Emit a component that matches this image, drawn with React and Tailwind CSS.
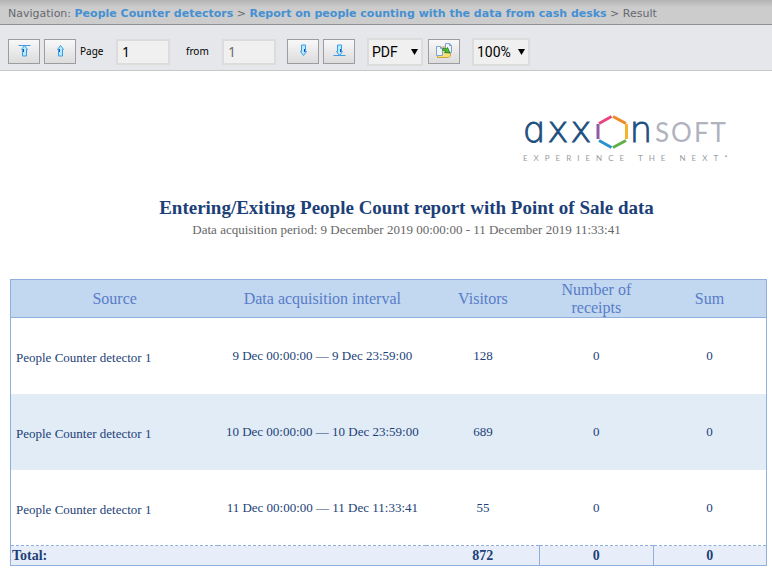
import { useState } from 'react'

const ROWS = [
  { id: 1, source: 'People Counter detector 1', interval: '9 Dec 00:00:00 — 9 Dec 23:59:00', visitors: 128, receipts: 0, sum: 0 },
  { id: 2, source: 'People Counter detector 1', interval: '10 Dec 00:00:00 — 10 Dec 23:59:00', visitors: 689, receipts: 0, sum: 0 },
  { id: 3, source: 'People Counter detector 1', interval: '11 Dec 00:00:00 — 11 Dec 11:33:41', visitors: 55, receipts: 0, sum: 0 },
]

function Breadcrumbs() {
  return (
    <nav
      aria-label="Navigation"
      className="flex h-[25px] items-center whitespace-pre border-b border-[#8f8f8f] bg-linear-to-b from-[#b4b4b4] to-[#cccccc] to-30% px-2 pt-1 font-['DejaVu_Sans',sans-serif] text-[11px] text-[#666870]"
    >
      <span>Navigation: </span>
      <a href="#detectors" className="font-bold text-[#4590d2]">People Counter detectors</a>
      <span> &gt; </span>
      <a href="#report" className="font-bold text-[#4590d2]">Report on people counting with the data from cash desks</a>
      <span> &gt; Result</span>
    </nav>
  )
}

function ToolButton({ label, children }) {
  return (
    <button
      type="button"
      aria-label={label}
      className="flex h-[25px] w-8 shrink-0 items-center justify-center border border-[#9b9da1] bg-linear-to-b from-[#f8f8f8] to-[#dcdcdc] pb-[2px]"
    >
      {children}
    </button>
  )
}

// Outlined page arrow, optionally with a bar at its tip (first / last page)
function ArrowIcon({ down = false, bar = false }) {
  return (
    <svg width="13" height="13" viewBox="0 0 13 13" fill="none" stroke="#3d9be6" className={down ? 'rotate-180' : ''}>
      {bar && <path d="M.5 1.5h12" />}
      <path d="M6.500 1.500 9.500 5.500H8.500V12H4.500V5.500H3.500Z" fill="#b5ecff" strokeLinejoin="round" />
      <path d="M5.500 5v3" stroke="#1a4fae" />
    </svg>
  )
}

function ExportIcon() {
  return (
    <svg width="18" height="17" viewBox="0 0 18 17" fill="none">
      <path d="M5.500 6.500 7.500 5h8v9l-2 1.500h-11v-3z" fill="#f7e07a" stroke="#d0a63a" />
      <path d="M10.500 1.500h4l2 2v7h-6z" fill="#eef5fc" stroke="#7fa3cf" />
      <path d="M14.500 1.500v2h2" stroke="#7fa3cf" />
      <path d="M1.500 4.500h4l2 2v7h-6z" fill="#eef5fc" stroke="#7fa3cf" />
      <path d="M5.500 4.500v2h2" stroke="#7fa3cf" />
      <path d="M7 7.500c1.500-1.500 3-1.500 4.500-.5L12.500 5.500l2.500 5.500-5.500-.5 1-1.500c-1-.5-2-.5-3.500-1.500z" fill="#4cc22f" stroke="#22751c" strokeWidth=".8" />
    </svg>
  )
}

function ToolSelect({ label, value, onChange, options, className }) {
  return (
    <div className={`relative h-7 shrink-0 ${className}`}>
      <select
        aria-label={label}
        value={value}
        onChange={(e) => onChange(e.target.value)}
        className="h-full w-full appearance-none border-2 border-[#dcdcdc] bg-[#f0f0f0] pl-[3px] font-['Roboto',sans-serif] text-sm text-black"
      >
        {options.map((option) => <option key={option}>{option}</option>)}
      </select>
      <svg width="7" height="6" viewBox="0 0 7 6" className="pointer-events-none absolute top-[11px] right-[5px]">
        <path d="M0 0h7L3.500 6z" fill="#000" />
      </svg>
    </div>
  )
}

function Toolbar() {
  const [page, setPage] = useState('1')
  const [format, setFormat] = useState('PDF')
  const [zoom, setZoom] = useState('100%')

  return (
    <div className="flex h-[46px] items-center border-b border-[#c8c8c8] bg-[#e6e7eb] px-2 pt-2 font-['Noto_Sans',sans-serif] text-[10px] text-black">
      <div className="flex gap-1">
        <ToolButton label="First page"><ArrowIcon bar /></ToolButton>
        <ToolButton label="Previous page"><ArrowIcon /></ToolButton>
      </div>
      <label htmlFor="page" className="ml-1 w-9">Page</label>
      <input
        id="page"
        value={page}
        onChange={(e) => setPage(e.target.value)}
        className="h-[26px] w-[54px] border-2 border-[#dcdcdc] bg-[#f0f0f0] px-1 text-sm"
      />
      <label htmlFor="total" className="ml-4 w-9">from</label>
      <input
        id="total"
        value="1"
        readOnly
        className="h-[26px] w-[54px] border-2 border-[#dcdcdc] bg-[#f0f0f0] px-1 text-sm text-[#6d6d6d]"
      />
      <div className="ml-[11px] flex gap-1">
        <ToolButton label="Next page"><ArrowIcon down /></ToolButton>
        <ToolButton label="Last page"><ArrowIcon down bar /></ToolButton>
      </div>
      <ToolSelect label="Format" value={format} onChange={setFormat} options={['PDF', 'XLS', 'DOC']} className="ml-3 w-14" />
      <div className="ml-[5px]">
        <ToolButton label="Export"><ExportIcon /></ToolButton>
      </div>
      <ToolSelect label="Zoom" value={zoom} onChange={setZoom} options={['50%', '75%', '100%', '150%']} className="ml-3 w-[58px]" />
    </div>
  )
}

function Logo() {
  return (
    <svg width="216" height="64" viewBox="0 -10 216 64" fill="none" role="img" aria-label="AxxonSoft">
      <g className="font-['DejaVu_Sans',sans-serif] text-[36px] font-extralight" fill="#1b4f80" stroke="#1b4f80" strokeWidth=".8" textAnchor="middle">
        <text x="12" y="31">ɑ</text>
        <text x="37" y="31">x</text>
        <text x="60" y="31">x</text>
        <text x="120" y="31">n</text>
      </g>
      <text x="134" y="31" className="font-['Lato',sans-serif] text-[26px] font-normal tracking-[2px]" fill="#b0b3be">SOFT</text>
      <g strokeWidth="3">
        <path d="M78 12.500 90.500 5.500" stroke="#e8457e" />
        <path d="M92 5.500 105 12.500" stroke="#ee8a22" />
        <path d="M105.500 13v15" stroke="#f6b32c" />
        <path d="M105 29.500 92 36.500" stroke="#5fb046" />
        <path d="M90.500 36.500 78 29.500" stroke="#2a93cf" />
        <path d="M77 13v15" stroke="#8f5aa8" />
      </g>
      <text x="2" y="50" className="font-['Lato',sans-serif] text-[8px] tracking-[6px]" fill="#9a9ca3">EXPERIENCE THE NEXT*</text>
    </svg>
  )
}

function ReportTable() {
  return (
    <table className="w-full table-fixed border-collapse border border-[#8fb0dc] text-center text-[13px] text-[#1c3f78]">
      <colgroup>
        <col className="w-[27.5%]" />
        <col className="w-[27.5%]" />
        <col className="w-[15%]" />
        <col className="w-[15%]" />
        <col className="w-[15%]" />
      </colgroup>
      <thead>
        <tr className="h-[38px] border border-[#8fb0dc] bg-[#c1d8f0] text-base leading-[18px] text-[#5a7cc8]">
          <th className="font-normal">Source</th>
          <th className="font-normal">Data acquisition interval</th>
          <th className="font-normal">Visitors</th>
          <th className="px-4 font-normal">Number of receipts</th>
          <th className="font-normal">Sum</th>
        </tr>
      </thead>
      <tbody>
        {ROWS.map((row) => (
          <tr key={row.id} className="h-[76px] even:bg-[#e1ecf6]">
            <td className="pt-1 pl-[5px] text-left">{row.source}</td>
            <td>{row.interval}</td>
            <td>{row.visitors}</td>
            <td>{row.receipts}</td>
            <td>{row.sum}</td>
          </tr>
        ))}
      </tbody>
      <tfoot>
        <tr className="h-5 border-t border-dashed border-[#8fb0dc] bg-[#e8eef9] text-sm leading-[18px]">
          <th colSpan={2} className="pl-px text-left">Total:</th>
          <th>872</th>
          <th className="border-x border-x-[#8fb0dc] [border-left-style:solid] [border-right-style:solid]">0</th>
          <th>0</th>
        </tr>
      </tfoot>
    </table>
  )
}

export default function App() {
  return (
    <div className="min-h-screen bg-white font-['Liberation_Serif',serif]">
      <Breadcrumbs />
      <Toolbar />
      <main className="pr-[5px] pl-[10px]">
        <div className="flex justify-end pt-[30px] pr-[30px]">
          <Logo />
        </div>
        <header className="pt-[31px] pb-[39px] pl-9 text-center">
          <h1 className="text-[19px] leading-6 font-bold text-[#1c3f78]">Entering/Exiting People Count report with Point of Sale data</h1>
          <p className="text-[13px] leading-5 text-[#666666]">Data acquisition period: 9 December 2019 00:00:00 - 11 December 2019 11:33:41</p>
        </header>
        <ReportTable />
      </main>
    </div>
  )
}
